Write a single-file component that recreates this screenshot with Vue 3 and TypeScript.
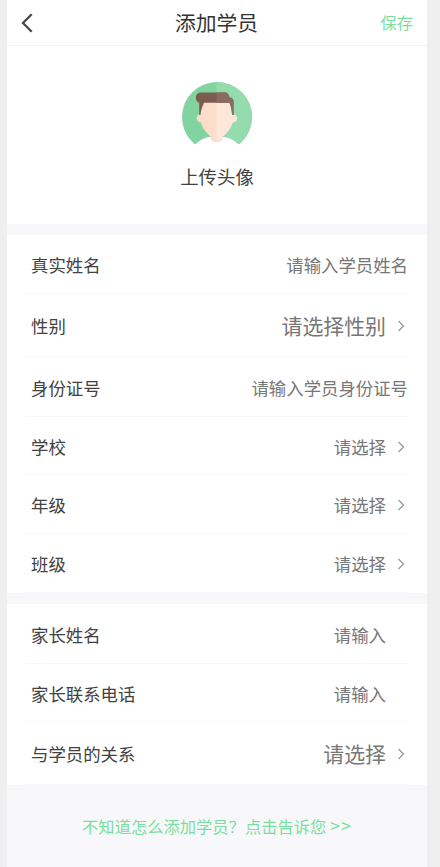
<script setup lang="ts">
interface Field {
  label: string
  hint: string
  height: number
  arrow?: boolean
  inset?: boolean
  large?: boolean
}

const groups: Field[][] = [
  [
    { label: '真实姓名', hint: '请输入学员姓名', height: 59 },
    { label: '性别', hint: '请选择性别', height: 63, arrow: true, large: true },
    { label: '身份证号', hint: '请输入学员身份证号', height: 60 },
    { label: '学校', hint: '请选择', height: 58, arrow: true },
    { label: '年级', hint: '请选择', height: 59, arrow: true },
    { label: '班级', hint: '请选择', height: 59, arrow: true },
  ],
  [
    { label: '家长姓名', hint: '请输入', height: 60, inset: true },
    { label: '家长联系电话', hint: '请输入', height: 58, inset: true },
    { label: '与学员的关系', hint: '请选择', height: 63, arrow: true, large: true },
  ],
]
</script>

<template>
  <main class="screen">
    <header class="bar">
      <svg class="back" viewBox="0 0 14 22" aria-hidden="true">
        <path d="M11.7 2.2 3 11l8.7 8.8" />
      </svg>
      <h1>添加学员</h1>
      <span class="save">保存</span>
    </header>

    <section class="upload">
      <svg class="avatar" viewBox="0 0 70 70" aria-hidden="true">
        <defs>
          <clipPath id="torso">
            <path d="M0 0h70v62.300H56.500C52 58 48 55.500 42 55H28C22 55.500 18 58 13.500 62.300H0z" />
          </clipPath>
          <clipPath id="right-half"><rect x="34.500" width="36" height="70" /></clipPath>
        </defs>
        <g clip-path="url(#torso)">
          <circle class="green" cx="35" cy="35" r="35" />
          <path class="green-light" d="M34.500 0H35a35 35 0 0 1 0 70h-.5z" />
        </g>
        <g class="face">
          <circle cx="18.700" cy="36.300" r="4" />
          <path d="M20.500 19h29l2 15c.3 6-2.500 12-6.500 16.500-1.500 1.800-3 3.200-4 4V56q-1 4.300-6.200 4.300T28.500 56v-1.500c-1-.8-2.500-2.200-4-4C20.500 46 17.700 40 18 34z" />
        </g>
        <g class="face-light" clip-path="url(#right-half)">
          <circle cx="51" cy="36.300" r="4" />
          <path d="M20.500 19h29l2 15c.3 6-2.500 12-6.500 16.500-1.500 1.800-3 3.200-4 4V56q-1 4.300-6.200 4.300T28.500 56v-1.500z" />
        </g>
        <path class="hair" d="M18.500 10.500H43q3.500 0 4.500 5 4 0 4 4.500v13h-1.300c-.5-5-1.200-9-2.700-12.300H22C20 25 18.800 29 18.400 33h-1.200V20.700c-4.800-1.200-4.800-10.200 1.300-10.200z" />
        <path class="hair-light" d="M34.500 10.500H43q3.500 0 4.500 5 4 0 4 4.500v13h-1.300c-.5-5-1.200-9-2.700-12.300h-13z" />
      </svg>
      <p>上传头像</p>
    </section>

    <section v-for="(group, index) in groups" :key="index" class="group">
      <div v-for="field in group" :key="field.label" class="row" :style="{ height: field.height + 'px' }">
        <span class="label">{{ field.label }}</span>
        <span class="hint" :class="{ large: field.large, inset: field.inset }">{{ field.hint }}</span>
        <svg v-if="field.arrow" class="arrow" viewBox="0 0 8 12" aria-hidden="true">
          <path d="m1.500 1 5 5-5 5" />
        </svg>
      </div>
    </section>

    <footer class="help">不知道怎么添加学员？点击告诉您 <span class="more">&gt;&gt;</span></footer>
  </main>
</template>

<style>
body {
  background: #efefef;
}
</style>

<style scoped>
.screen {
  box-sizing: border-box;
  width: 420px;
  height: 867px;
  margin-left: 7px;
  overflow: hidden;
  background: #f8f8fa;
  color: #424242;
  font-family: "Noto Sans CJK SC", sans-serif;
}

.bar {
  box-sizing: border-box;
  display: grid;
  grid-template-columns: 1fr auto 1fr;
  align-items: center;
  height: 46px;
  padding: 0 14px 0 13px;
  border-bottom: 1px solid #f3f3f4;
  background: #fff;
}

.back {
  width: 14px;
  height: 22px;
  fill: none;
  stroke: #484848;
  stroke-width: 2.3;
}

h1 {
  margin: 0;
  padding-bottom: 2px;
  color: #333;
  font-size: 20.8px;
  font-weight: 400;
  line-height: 30px;
}

.save {
  justify-self: end;
  padding-bottom: 2px;
  color: #79dfa0;
  font-size: 16.3px;
  line-height: 24px;
}

.upload {
  box-sizing: border-box;
  display: flex;
  flex-direction: column;
  align-items: center;
  height: 178px;
  padding-top: 36px;
  background: #fff;
}

.avatar {
  width: 70px;
  height: 70px;
}

.green { fill: #81d39f; }
.green-light { fill: #94dbad; }
.face { fill: #fcddca; }
.face-light { fill: #fde6da; }
.hair { fill: #7b5d50; }
.hair-light { fill: #8a6b5f; }

.upload p {
  margin: 10px 0 0;
  font-size: 18.4px;
  line-height: 28px;
}

.group {
  margin-top: 11px;
  padding: 0 19px 0 18px;
  background: #fff;
}

.row {
  box-sizing: border-box;
  display: flex;
  align-items: center;
  padding: 2px 0 0 6px;
  border-bottom: 1px solid #f8f8f8;
  font-size: 17.4px;
  line-height: 26px;
}

.label {
  flex: 1;
}

.hint {
  color: #777;
}

.large {
  padding-bottom: 2px;
  font-size: 20.9px;
  line-height: 30px;
}

.inset {
  margin-right: 22px;
}

.arrow {
  width: 8px;
  height: 12px;
  margin: 0 3px 0 11px;
  fill: none;
  stroke: #999;
  stroke-width: 1.3;
}

.help {
  padding-top: 29px;
  color: #79dfa0;
  font-size: 16.3px;
  line-height: 24px;
  text-align: center;
  white-space: nowrap;
}

.more {
  font-size: 18px;
  letter-spacing: 1px;
  line-height: 1;
}
</style>
